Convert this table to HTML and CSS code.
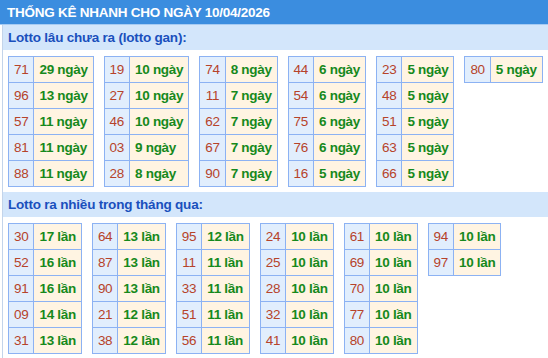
FILE: index.html
```html
<!DOCTYPE html>
<html lang="vi">
<head>
<meta charset="utf-8">
<title>Thống kê nhanh</title>
<link rel="stylesheet" href="styles.css">
</head>
<body>
<div class="title">THỐNG KÊ NHANH CHO NGÀY 10/04/2026</div>
<div class="content">
  <div class="sec-head">Lotto lâu chưa ra (lotto gan):</div>
  <div class="list">
    <table class="tb"><tr><td class="n">71</td><td class="v">29 ngày</td></tr><tr><td class="n">96</td><td class="v">13 ngày</td></tr><tr><td class="n">57</td><td class="v">11 ngày</td></tr><tr><td class="n">81</td><td class="v">11 ngày</td></tr><tr><td class="n">88</td><td class="v">11 ngày</td></tr></table>
    <table class="tb"><tr><td class="n">19</td><td class="v">10 ngày</td></tr><tr><td class="n">27</td><td class="v">10 ngày</td></tr><tr><td class="n">46</td><td class="v">10 ngày</td></tr><tr><td class="n">03</td><td class="v">9 ngày</td></tr><tr><td class="n">28</td><td class="v">8 ngày</td></tr></table>
    <table class="tb"><tr><td class="n">74</td><td class="v">8 ngày</td></tr><tr><td class="n">11</td><td class="v">7 ngày</td></tr><tr><td class="n">62</td><td class="v">7 ngày</td></tr><tr><td class="n">67</td><td class="v">7 ngày</td></tr><tr><td class="n">90</td><td class="v">7 ngày</td></tr></table>
    <table class="tb"><tr><td class="n">44</td><td class="v">6 ngày</td></tr><tr><td class="n">54</td><td class="v">6 ngày</td></tr><tr><td class="n">75</td><td class="v">6 ngày</td></tr><tr><td class="n">76</td><td class="v">6 ngày</td></tr><tr><td class="n">16</td><td class="v">5 ngày</td></tr></table>
    <table class="tb"><tr><td class="n">23</td><td class="v">5 ngày</td></tr><tr><td class="n">48</td><td class="v">5 ngày</td></tr><tr><td class="n">51</td><td class="v">5 ngày</td></tr><tr><td class="n">63</td><td class="v">5 ngày</td></tr><tr><td class="n">66</td><td class="v">5 ngày</td></tr></table>
    <table class="tb"><tr><td class="n">80</td><td class="v">5 ngày</td></tr></table>
  </div>
  <div class="sec-head">Lotto ra nhiều trong tháng qua:</div>
  <div class="list">
    <table class="tb"><tr><td class="n">30</td><td class="v">17 lần</td></tr><tr><td class="n">52</td><td class="v">16 lần</td></tr><tr><td class="n">91</td><td class="v">16 lần</td></tr><tr><td class="n">09</td><td class="v">14 lần</td></tr><tr><td class="n">31</td><td class="v">13 lần</td></tr></table>
    <table class="tb"><tr><td class="n">64</td><td class="v">13 lần</td></tr><tr><td class="n">87</td><td class="v">13 lần</td></tr><tr><td class="n">90</td><td class="v">13 lần</td></tr><tr><td class="n">21</td><td class="v">12 lần</td></tr><tr><td class="n">38</td><td class="v">12 lần</td></tr></table>
    <table class="tb"><tr><td class="n">95</td><td class="v">12 lần</td></tr><tr><td class="n">11</td><td class="v">11 lần</td></tr><tr><td class="n">33</td><td class="v">11 lần</td></tr><tr><td class="n">51</td><td class="v">11 lần</td></tr><tr><td class="n">56</td><td class="v">11 lần</td></tr></table>
    <table class="tb"><tr><td class="n">24</td><td class="v">10 lần</td></tr><tr><td class="n">25</td><td class="v">10 lần</td></tr><tr><td class="n">28</td><td class="v">10 lần</td></tr><tr><td class="n">32</td><td class="v">10 lần</td></tr><tr><td class="n">41</td><td class="v">10 lần</td></tr></table>
    <table class="tb"><tr><td class="n">61</td><td class="v">10 lần</td></tr><tr><td class="n">69</td><td class="v">10 lần</td></tr><tr><td class="n">70</td><td class="v">10 lần</td></tr><tr><td class="n">77</td><td class="v">10 lần</td></tr><tr><td class="n">80</td><td class="v">10 lần</td></tr></table>
    <table class="tb"><tr><td class="n">94</td><td class="v">10 lần</td></tr><tr><td class="n">97</td><td class="v">10 lần</td></tr></table>
  </div>
</div>
</body>
</html>
```
FILE: styles.css
```css
html, body {
  margin: 0;
  padding: 0;
  background: #ffffff;
  font-family: "Liberation Sans", Arial, sans-serif;
  font-size: 13.5px;
}
.title {
  height: 24px;
  line-height: 25px;
  background: #3b8ddf;
  border-bottom: 1px solid #a6cbf3;
  color: #ffffff;
  font-weight: bold;
  letter-spacing: -0.25px;
  padding-left: 7px;
  white-space: nowrap;
}
.content {
  margin-left: 2px;
  border-left: 1px solid #c3d4ea;
}
.sec-head {
  height: 25px;
  line-height: 25px;
  background: #d3e6fb;
  color: #1a50bd;
  font-weight: bold;
  letter-spacing: -0.2px;
  padding-left: 5px;
  white-space: nowrap;
}
.list {
  display: flex;
  align-items: flex-start;
  gap: 10px;
  padding: 6px 0 5px 5px;
}
.tb {
  border-collapse: collapse;
  flex: none;
}
.tb td {
  border: 1px solid #8cb2f3;
  line-height: 25px;
  padding: 0 5px;
  white-space: nowrap;
  letter-spacing: -0.3px;
}
.tb .n {
  background: #e1eefd;
  color: #b6432a;
  text-align: center;
}
.tb .v {
  background: #fff4e2;
  color: #16891c;
  font-weight: bold;
}
```
